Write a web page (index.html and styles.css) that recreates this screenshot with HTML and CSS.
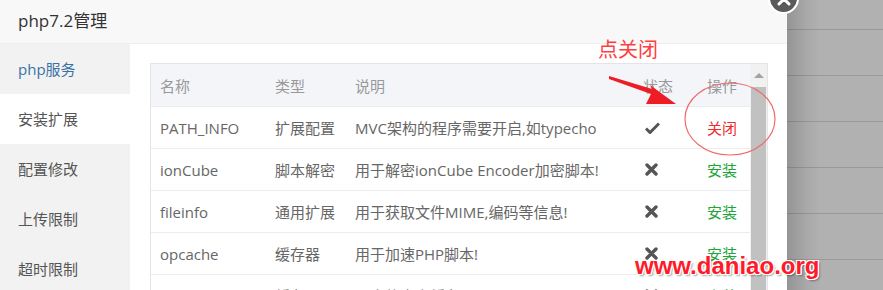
FILE: index.html
```html
<!DOCTYPE html>
<html lang="zh-CN">
<head>
    <meta charset="UTF-8">
    <title>php7.2管理</title>
    <link rel="stylesheet" href="styles.css">
</head>
<body>
    <div class="layer">
        <div class="layer-title">php7.2管理</div>
        <span class="layer-close">
            <svg width="14" height="14" viewBox="0 0 14 14"><path d="M2 2L12 12M12 2L2 12" stroke="#fff" stroke-width="3" stroke-linecap="round"/></svg>
        </span>
        <div class="layer-body">
            <ul class="side">
                <li class="side-link">php服务</li>
                <li class="active">安装扩展</li>
                <li>配置修改</li>
                <li>上传限制</li>
                <li>超时限制</li>
            </ul>
            <div class="main">
                <div class="table-box">
                    <div class="table">
                        <div class="row head">
                            <span class="c-name">名称</span>
                            <span class="c-type">类型</span>
                            <span class="c-desc">说明</span>
                            <span class="c-status">状态</span>
                            <span class="c-op">操作</span>
                        </div>
                        <div class="row">
                            <span class="c-name">PATH_INFO</span>
                            <span class="c-type">扩展配置</span>
                            <span class="c-desc">MVC架构的程序需要开启,如typecho</span>
                            <span class="c-status"><svg class="icon-ok" width="15" height="12" viewBox="0 0 15 12"><path d="M1 6.5L5 10.5L14 1.5" fill="none" stroke="#555" stroke-width="3"/></svg></span>
                            <span class="c-op"><a class="btn-close" href="#">关闭</a></span>
                        </div>
                        <div class="row">
                            <span class="c-name">ionCube</span>
                            <span class="c-type">脚本解密</span>
                            <span class="c-desc">用于解密ionCube Encoder加密脚本!</span>
                            <span class="c-status"><svg width="13" height="13" viewBox="0 0 13 13"><path d="M2 2L11 11M11 2L2 11" stroke="#555" stroke-width="3.4" stroke-linecap="round"/></svg></span>
                            <span class="c-op"><a class="btn-install" href="#">安装</a></span>
                        </div>
                        <div class="row">
                            <span class="c-name">fileinfo</span>
                            <span class="c-type">通用扩展</span>
                            <span class="c-desc">用于获取文件MIME,编码等信息!</span>
                            <span class="c-status"><svg width="13" height="13" viewBox="0 0 13 13"><path d="M2 2L11 11M11 2L2 11" stroke="#555" stroke-width="3.4" stroke-linecap="round"/></svg></span>
                            <span class="c-op"><a class="btn-install" href="#">安装</a></span>
                        </div>
                        <div class="row">
                            <span class="c-name">opcache</span>
                            <span class="c-type">缓存器</span>
                            <span class="c-desc">用于加速PHP脚本!</span>
                            <span class="c-status"><svg width="13" height="13" viewBox="0 0 13 13"><path d="M2 2L11 11M11 2L2 11" stroke="#555" stroke-width="3.4" stroke-linecap="round"/></svg></span>
                            <span class="c-op"><a class="btn-install" href="#">安装</a></span>
                        </div>
                        <div class="row">
                            <span class="c-name">memcache</span>
                            <span class="c-type">缓存器</span>
                            <span class="c-desc">强大的内容缓存器</span>
                            <span class="c-status"><svg width="13" height="13" viewBox="0 0 13 13"><path d="M2 2L11 11M11 2L2 11" stroke="#555" stroke-width="3.4" stroke-linecap="round"/></svg></span>
                            <span class="c-op"><a class="btn-install" href="#">安装</a></span>
                        </div>
                    </div>
                    <div class="scrollbar">
                        <span class="scroll-up"></span>
                        <span class="scroll-thumb"></span>
                    </div>
                </div>
            </div>
        </div>

        <!-- 标注 -->
        <div class="note-text">点关闭</div>
        <svg class="note-draw" width="787" height="290" viewBox="0 0 787 290">
            <polygon points="609,76 652,89 650,85 676,104 646,104 651,94 609,79" fill="#ee1c25"/>
            <ellipse cx="730" cy="119" rx="45" ry="36" fill="none" stroke="#ef6b6b" stroke-width="1.2"/>
        </svg>
    </div>
    <div class="backdrop"></div>

    <div class="watermark">www.daniao.org</div>
</body>
</html>
```

FILE: styles.css
```css
* {
    box-sizing: border-box;
    margin: 0;
    padding: 0;
}

body {
    width: 883px;
    height: 290px;
    overflow: hidden;
    display: flex;
    font-family: "Open Sans", "Noto Sans CJK SC", sans-serif;
    background-color: #b1b1b1;
    position: relative;
}

.layer {
    width: 787px;
    flex-shrink: 0;
    background-color: #ffffff;
    position: relative;
    z-index: 2;
}

.layer-title {
    height: 44px;
    line-height: 41px;
    padding-left: 18px;
    font-size: 17px;
    color: #333;
    background-color: #f8f8f8;
    border-bottom: 1px solid #eeeeee;
}

.layer-close {
    position: absolute;
    left: 768px;
    top: -17px;
    width: 31px;
    height: 31px;
    border-radius: 50%;
    background-color: #5a5a5a;
    border: 2px solid #ffffff;
    display: flex;
    align-items: center;
    justify-content: center;
}

.layer-body {
    display: flex;
    height: 246px;
}

.side {
    width: 130px;
    list-style: none;
    background-color: #f2f2f2;
}

.side li {
    height: 50px;
    line-height: 50px;
    padding-left: 18px;
    font-size: 15px;
    color: #555;
}

.side .side-link {
    color: #3a72a6;
}

.side .active {
    background-color: #ffffff;
}

.main {
    flex: 1;
    padding: 19px 19px 0 20px;
    overflow: hidden;
}

.table-box {
    display: flex;
    border: 1px solid #e4e4e4;
    border-bottom: none;
    height: 300px;
}

.table {
    width: 599px;
}

.row {
    display: flex;
    align-items: center;
    height: 42px;
    border-bottom: 1px solid #ececec;
    font-size: 15px;
    color: #666;
}

.row.head {
    height: 43px;
    background-color: #f3f5f9;
    color: #999;
}

.row span {
    padding-left: 9px;
    white-space: nowrap;
}

.c-name { width: 115px; }
.c-type { width: 80px; }
.c-desc { width: 288px; }
.c-status { width: 60px; display: flex; align-items: center; }
.c-op { width: 56px; text-align: right; padding-right: 13px; }

.c-status svg {
    margin-left: 2px;
}

.btn-close,
.btn-install {
    text-decoration: none;
}

.btn-close {
    color: #ee2b2b;
}

.btn-install {
    color: #20a53a;
}

.scrollbar {
    width: 17px;
    background-color: #f1f1f1;
    display: flex;
    flex-direction: column;
    align-items: center;
}

.scroll-up {
    margin-top: 9px;
    width: 0;
    height: 0;
    border-left: 5px solid transparent;
    border-right: 5px solid transparent;
    border-bottom: 5px solid #a3a3a3;
}

.scroll-thumb {
    margin-top: 9px;
    width: 15px;
    flex: 1;
    background-color: #c1c1c1;
}

.backdrop {
    flex: 1;
    background-color: #b1b1b1;
    background-image:
        linear-gradient(to right, rgba(0, 0, 0, 0.16), rgba(0, 0, 0, 0.04) 22px, rgba(0, 0, 0, 0) 34px),
        repeating-linear-gradient(to bottom, transparent 0, transparent 29px, #999999 29px, #999999 30px, transparent 30px, transparent 46px);
}

/* 标注 */
.note-text {
    position: absolute;
    left: 598px;
    top: 36px;
    font-size: 20px;
    line-height: 26px;
    color: #ff4040;
    font-family: "Noto Sans CJK SC", sans-serif;
}

.note-draw {
    position: absolute;
    left: 0;
    top: 0;
    pointer-events: none;
}

.watermark {
    position: absolute;
    left: 635px;
    top: 252px;
    z-index: 5;
    font-family: "Liberation Sans", Arial, sans-serif;
    font-weight: bold;
    font-size: 24px;
    line-height: 28px;
    color: #ff1a2b;
    text-shadow:
        1px 0 0 #fff, -1px 0 0 #fff, 0 1px 0 #fff, 0 -1px 0 #fff,
        1px 1px 0 #fff, -1px -1px 0 #fff, 1px -1px 0 #fff, -1px 1px 0 #fff,
        2px 2px 2px rgba(0, 0, 0, 0.35);
}
```
